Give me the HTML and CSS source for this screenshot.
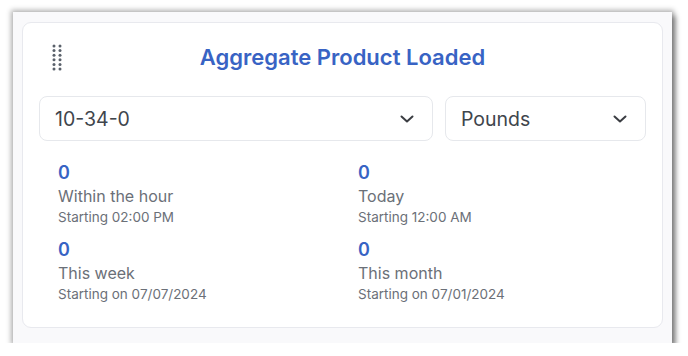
FILE: index.html
```html
<!DOCTYPE html>
<html lang="en">
    <head>
        <meta charset="UTF-8">
        <title>Aggregate Product Loaded</title>
        <link rel="stylesheet" href="styles.css">
    </head>
    <body>
        <div class="frame">
            <div class="card">
                <div class="card-head">
                    <svg class="drag-handle" width="10" height="27" viewBox="0 0 10 27">
                        <g fill="#5a616b">
                            <circle cx="2" cy="2" r="1.5"/><circle cx="8" cy="2" r="1.5"/>
                            <circle cx="2" cy="6.6" r="1.5"/><circle cx="8" cy="6.6" r="1.5"/>
                            <circle cx="2" cy="11.2" r="1.5"/><circle cx="8" cy="11.2" r="1.5"/>
                            <circle cx="2" cy="15.8" r="1.5"/><circle cx="8" cy="15.8" r="1.5"/>
                            <circle cx="2" cy="20.4" r="1.5"/><circle cx="8" cy="20.4" r="1.5"/>
                            <circle cx="2" cy="25" r="1.5"/><circle cx="8" cy="25" r="1.5"/>
                        </g>
                    </svg>
                    <h2 class="card-title">Aggregate Product Loaded</h2>
                </div>
                <div class="filters">
                    <div class="select-box">
                        <span>10-34-0</span>
                        <svg class="chevron" width="14" height="8" viewBox="0 0 14 8"><path d="M1.5 1.5 L7 6.5 L12.5 1.5" fill="none" stroke="#3a3d42" stroke-width="2" stroke-linecap="round" stroke-linejoin="round"/></svg>
                    </div>
                    <div class="select-box">
                        <span>Pounds</span>
                        <svg class="chevron" width="14" height="8" viewBox="0 0 14 8"><path d="M1.5 1.5 L7 6.5 L12.5 1.5" fill="none" stroke="#3a3d42" stroke-width="2" stroke-linecap="round" stroke-linejoin="round"/></svg>
                    </div>
                </div>
                <div class="stats">
                    <div class="stat">
                        <div class="stat-value">0</div>
                        <div class="stat-label">Within the hour</div>
                        <div class="stat-sub">Starting 02:00 PM</div>
                    </div>
                    <div class="stat">
                        <div class="stat-value">0</div>
                        <div class="stat-label">Today</div>
                        <div class="stat-sub">Starting 12:00 AM</div>
                    </div>
                    <div class="stat">
                        <div class="stat-value">0</div>
                        <div class="stat-label">This week</div>
                        <div class="stat-sub">Starting on 07/07/2024</div>
                    </div>
                    <div class="stat">
                        <div class="stat-value">0</div>
                        <div class="stat-label">This month</div>
                        <div class="stat-sub">Starting on 07/01/2024</div>
                    </div>
                </div>
            </div>
        </div>
    </body>
</html>
```

FILE: styles.css
```css
* {
    padding: 0;
    margin: 0;
    box-sizing: border-box;
}
body {
    background: #ffffff;
    font-family: Inter, "Noto Sans", sans-serif;
}
.frame {
    width: 659px;
    height: 331px;
    margin: 12px 0 0 13px;
    padding: 10px 9px 0 9px;
    background: #f9f9fb;
    box-shadow: 0 0 5px 2px rgba(0, 0, 0, 0.3), 4px 4px 5px rgba(0, 0, 0, 0.35);
}
.card {
    height: 306px;
    background: #ffffff;
    border: 1px solid #e8e9ee;
    border-radius: 9px;
    padding: 20px 16px 0 16px;
}
.card-head {
    display: grid;
    grid-template-columns: 1fr auto 1fr;
    align-items: center;
    height: 28px;
}
.drag-handle {
    grid-column: 1;
    grid-row: 1;
    margin-left: 13px;
}
.card-title {
    grid-column: 2;
    grid-row: 1;
    font-size: 22px;
    font-weight: 600;
    line-height: 28px;
    color: #3863c4;
}
.filters {
    display: grid;
    grid-template-columns: 394px 1fr;
    gap: 12px;
    margin-top: 25px;
}
.select-box {
    height: 45px;
    border: 1px solid #e6e8ec;
    border-radius: 8px;
    display: flex;
    align-items: center;
    justify-content: space-between;
    padding: 0 18px 0 15px;
    font-size: 19.5px;
    color: #40454c;
}
.stats {
    display: grid;
    grid-template-columns: 300px 300px;
    row-gap: 11px;
    margin-top: 20px;
    padding-left: 19px;
}
.stat-value {
    font-size: 18px;
    font-weight: 600;
    line-height: 24px;
    color: #3863c4;
}
.stat-label {
    font-size: 16px;
    line-height: 22px;
    color: #6b7078;
}
.stat-sub {
    font-size: 13.5px;
    line-height: 20px;
    color: #6b7078;
}
```
